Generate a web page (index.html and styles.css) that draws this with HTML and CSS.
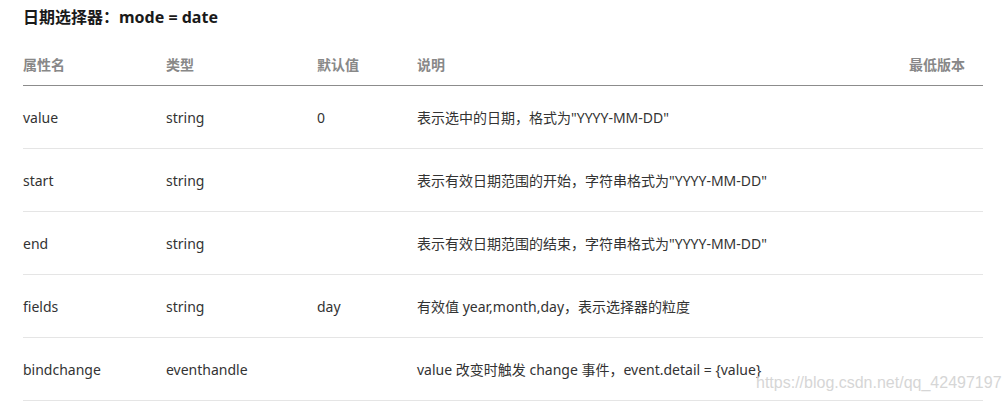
FILE: index.html
```html
<!DOCTYPE html>
<html lang="zh">
<head>
<meta charset="utf-8">
<link rel="stylesheet" href="styles.css">
</head>
<body>
<div class="page">
  <h3 class="title">日期选择器：mode = date</h3>
  <div class="table">
    <div class="row head">
      <div class="cell">属性名</div>
      <div class="cell">类型</div>
      <div class="cell">默认值</div>
      <div class="cell">说明</div>
      <div class="cell last">最低版本</div>
    </div>
    <div class="row">
      <div class="cell">value</div>
      <div class="cell">string</div>
      <div class="cell">0</div>
      <div class="cell">表示选中的日期，格式为"YYYY-MM-DD"</div>
      <div class="cell last"></div>
    </div>
    <div class="row">
      <div class="cell">start</div>
      <div class="cell">string</div>
      <div class="cell"></div>
      <div class="cell">表示有效日期范围的开始，字符串格式为"YYYY-MM-DD"</div>
      <div class="cell last"></div>
    </div>
    <div class="row">
      <div class="cell">end</div>
      <div class="cell">string</div>
      <div class="cell"></div>
      <div class="cell">表示有效日期范围的结束，字符串格式为"YYYY-MM-DD"</div>
      <div class="cell last"></div>
    </div>
    <div class="row">
      <div class="cell">fields</div>
      <div class="cell">string</div>
      <div class="cell">day</div>
      <div class="cell">有效值 year,month,day，表示选择器的粒度</div>
      <div class="cell last"></div>
    </div>
    <div class="row">
      <div class="cell">bindchange</div>
      <div class="cell">eventhandle</div>
      <div class="cell"></div>
      <div class="cell">value 改变时触发 change 事件，event.detail = {value}</div>
      <div class="cell last"></div>
    </div>
  </div>
  <div class="watermark">https://blog.csdn.net/qq_42497197</div>
</div>
</body>
</html>
```
FILE: styles.css
```css
html, body {
  margin: 0;
  padding: 0;
  background: #fff;
}
body {
  font-family: "Noto Sans", "Noto Sans CJK SC", sans-serif;
  color: #333;
}
.page {
  position: relative;
  width: 1008px;
  height: 412px;
  padding: 0 25px 0 23px;
  box-sizing: border-box;
  overflow: hidden;
}
.title {
  margin: 0;
  padding-top: 6px;
  height: 43px;
  box-sizing: border-box;
  font-size: 16px;
  line-height: 22px;
  font-weight: bold;
  color: #1a1a1a;
}
.table {
  width: 960px;
}
.row {
  display: grid;
  grid-template-columns: 143px 151px 100px 1fr auto;
  align-items: center;
  height: 62px;
  border-bottom: 1px solid #e5e5e5;
  font-size: 14px;
  color: #333;
}
.row.head {
  height: 42px;
  border-bottom: 1px solid #8c8c8c;
  font-size: 14px;
  font-weight: bold;
  color: #888;
}
.cell.last {
  padding-right: 18px;
  text-align: right;
}
.watermark {
  position: absolute;
  left: 756px;
  top: 374px;
  font-family: "Liberation Sans", Arial, sans-serif;
  font-size: 16px;
  color: #d6d6d6;
}
```
